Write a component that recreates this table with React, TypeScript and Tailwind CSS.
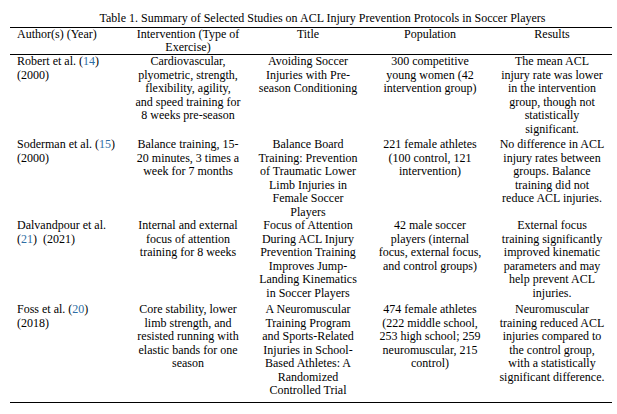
type Cell = React.ReactNode;

const Ref = ({ n }: { n: number }) => (
  <>
    (<span className="text-[#2e6da4]">{n}</span>)
  </>
);

// lines kept as in the reference so the wrap points match exactly
const Lines = ({ lines }: { lines: string[] }) => (
  <>
    {lines.map((l, i) => (
      <div key={i} className="whitespace-nowrap">
        {l}
      </div>
    ))}
  </>
);

const rows: { cells: Cell[]; pad: string }[] = [
  {
    pad: "pb-[2px]",
    cells: [
      <>
        <div>Robert et al. <Ref n={14} /></div>
        <div>(2000)</div>
      </>,
      <Lines lines={["Cardiovascular,", "plyometric, strength,", "flexibility, agility,", "and speed training for", "8 weeks pre-season"]} />,
      <Lines lines={["Avoiding Soccer", "Injuries with Pre-", "season Conditioning"]} />,
      <Lines lines={["300 competitive", "young women (42", "intervention group)"]} />,
      <Lines lines={["The mean ACL", "injury rate was lower", "in the intervention", "group, though not", "statistically", "significant."]} />,
    ],
  },
  {
    pad: "pb-0",
    cells: [
      <>
        <div>Soderman et al. <Ref n={15} /></div>
        <div>(2000)</div>
      </>,
      <Lines lines={["Balance training, 15-", "20 minutes, 3 times a", "week for 7 months"]} />,
      <Lines lines={["Balance Board", "Training: Prevention", "of Traumatic Lower", "Limb Injuries in", "Female Soccer", "Players"]} />,
      <Lines lines={["221 female athletes", "(100 control, 121", "intervention)"]} />,
      <Lines lines={["No difference in ACL", "injury rates between", "groups. Balance", "training did not", "reduce ACL injuries."]} />,
    ],
  },
  {
    pad: "pb-[3px]",
    cells: [
      <>
        <div>Dalvandpour et al.</div>
        <div><Ref n={21} />&nbsp; (2021)</div>
      </>,
      <Lines lines={["Internal and external", "focus of attention", "training for 8 weeks"]} />,
      <Lines lines={["Focus of Attention", "During ACL Injury", "Prevention Training", "Improves Jump-", "Landing Kinematics", "in Soccer Players"]} />,
      <Lines lines={["42 male soccer", "players (internal", "focus, external focus,", "and control groups)"]} />,
      <Lines lines={["External focus", "training significantly", "improved kinematic", "parameters and may", "help prevent ACL", "injuries."]} />,
    ],
  },
  {
    pad: "pb-[4px]",
    cells: [
      <>
        <div>Foss et al. <Ref n={20} /></div>
        <div>(2018)</div>
      </>,
      <Lines lines={["Core stability, lower", "limb strength, and", "resisted running with", "elastic bands for one", "season"]} />,
      <Lines lines={["A Neuromuscular", "Training Program", "and Sports-Related", "Injuries in School-", "Based Athletes: A", "Randomized", "Controlled Trial"]} />,
      <Lines lines={["474 female athletes", "(222 middle school,", "253 high school; 259", "neuromuscular, 215", "control)"]} />,
      <Lines lines={["Neuromuscular", "training reduced ACL", "injuries compared to", "the control group,", "with a statistically", "significant difference."]} />,
    ],
  },
];

// column slots (table runs x=10..612): centres ~188 / 308 / 430 / 552
const COLS = [
  "w-[118px] pl-[7px] items-start",
  "w-[120px] items-center",
  "w-[120px] items-center",
  "w-[124px] items-center",
  "w-[120px] items-center",
];

const Row = ({ cells, className }: { cells: Cell[]; className?: string }) => (
  <div className={`flex items-start ${className ?? ""}`}>
    {cells.map((c, i) => (
      <div key={i} className={`shrink-0 flex flex-col text-center ${COLS[i]}`}>
        {c}
      </div>
    ))}
  </div>
);

export default function App() {
  return (
    <div
      className="w-[617px] h-[414px] bg-white text-black text-[12px] leading-[13.5px] overflow-hidden"
      style={{ fontFamily: '"Liberation Serif", "Times New Roman", serif' }}
    >
      <div className="pt-[12px] pb-[1.5px] pl-[28px] text-center whitespace-nowrap">
        Table 1. Summary of Selected Studies on ACL Injury Prevention Protocols in Soccer Players
      </div>
      <div className="ml-[10px] w-[602px]">
        {/* Header */}
        <div className="border-t-[1.5px] border-b-[1.5px] border-black leading-[13px]">
          <Row
            cells={[
              "Author(s) (Year)",
              <Lines lines={["Intervention (Type of", "Exercise)"]} />,
              "Title",
              "Population",
              "Results",
            ]}
          />
        </div>

        {/* Body */}
        <div className="border-b-[1.5px] border-black">
          {rows.map((r, i) => (
            <Row key={i} cells={r.cells} className={r.pad} />
          ))}
        </div>
      </div>
    </div>
  );
}
